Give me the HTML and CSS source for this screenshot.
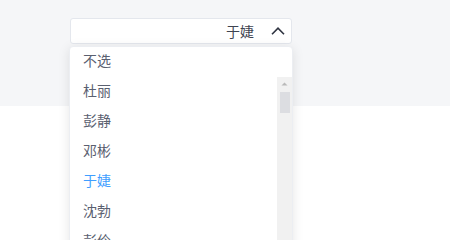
FILE: index.html
```html
<!DOCTYPE html>
<html lang="zh">
<head>
<meta charset="utf-8">
<link rel="stylesheet" href="styles.css">
</head>
<body>
<div class="page">
  <div class="stage">
    <div class="field">
      <div class="select">
        <span class="value">于婕</span>
        <svg class="chev" width="14" height="8" viewBox="0 0 14 8"><polyline points="1,7.2 7,1.2 13,7.2" fill="none" stroke="#2f3441" stroke-width="1.6"/></svg>
      </div>
      <div class="dropdown">
        <div class="item">不选</div>
        <div class="list">
          <div class="options">
            <div class="item">杜丽</div>
            <div class="item">彭静</div>
            <div class="item">邓彬</div>
            <div class="item selected">于婕</div>
            <div class="item">沈勃</div>
            <div class="item">彭伶</div>
            <div class="item">王磊</div>
            <div class="item">李娜</div>
            <div class="item">张涛</div>
          </div>
          <div class="scrollbar">
            <div class="sb-button"><svg width="15" height="15" viewBox="0 0 15 15"><polygon points="4.5,8.5 7.5,5.5 10.5,8.5" fill="#b9b9b9"/></svg></div>
            <div class="sb-thumb"></div>
          </div>
        </div>
      </div>
    </div>
  </div>
</div>
</body>
</html>
```
FILE: styles.css
```css
body {
  margin: 0;
  padding: 0;
  background: #ffffff;
  font-family: "Noto Sans CJK SC", "Noto Sans", sans-serif;
}
.page {
  height: 240px;
  overflow: hidden;
  position: relative;
}
.stage {
  height: 106px;
  background: #f5f6f8;
  padding: 18px 0 0 70px;
  box-sizing: border-box;
}
.field {
  position: relative;
  width: 222px;
}
.select {
  height: 26px;
  box-sizing: border-box;
  background: #fff;
  border: 1px solid #e4e7ed;
  border-radius: 3px;
  display: flex;
  align-items: center;
  justify-content: flex-end;
  padding-right: 6px;
  color: #3f4451;
  font-size: 14px;
}
.value {
  line-height: 1;
}
.chev {
  margin-left: 17px;
  display: block;
}
.dropdown {
  position: absolute;
  z-index: 10;
  top: 28px;
  left: -1px;
  width: 224px;
  height: 274px;
  box-sizing: border-box;
  background: #fff;
  border: 1px solid #eceef2;
  border-radius: 4px;
  box-shadow: 0 2px 12px 0 rgba(0, 0, 0, 0.1);
  display: flex;
  flex-direction: column;
  overflow: hidden;
}
.item {
  height: 30px;
  box-sizing: border-box;
  flex: none;
  display: flex;
  align-items: center;
  padding: 0 0 4px 13px;
  font-size: 14px;
  color: #5a6070;
}
.item.selected {
  color: #409eff;
}
.list {
  flex: 1;
  display: flex;
  min-height: 0;
}
.options {
  flex: 1;
}
.scrollbar {
  width: 15px;
  flex: none;
  background: #f1f1f1;
  display: flex;
  flex-direction: column;
  align-items: center;
}
.sb-button {
  height: 15px;
}
.sb-button svg {
  display: block;
}
.sb-thumb {
  width: 10px;
  height: 21px;
  margin-left: 1px;
  background: #dcdde1;
}
```
